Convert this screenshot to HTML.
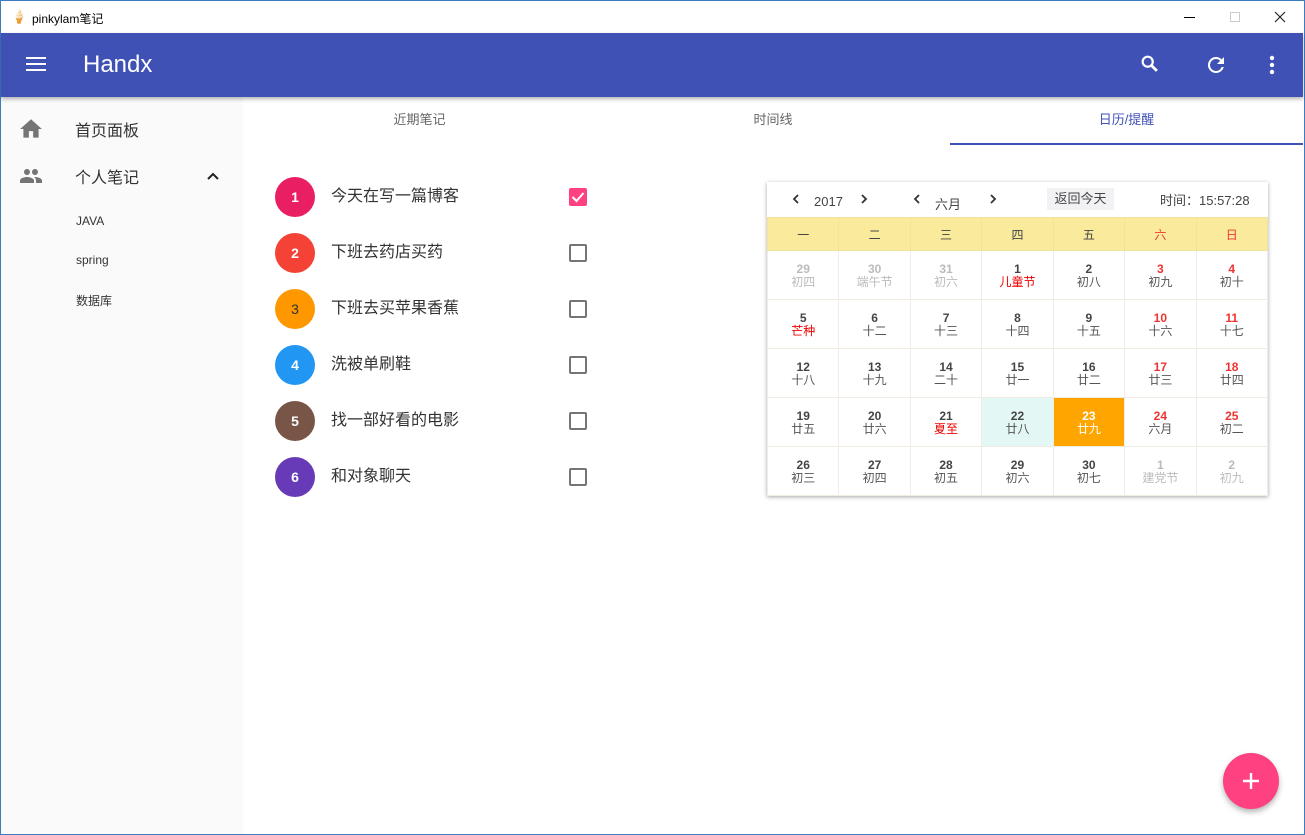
<!DOCTYPE html>
<html><head><meta charset="utf-8"><style>
*{margin:0;padding:0;box-sizing:border-box}
body{width:1305px;height:835px;overflow:hidden;background:#fff;font-family:"Liberation Sans","Noto Sans CJK SC",sans-serif;position:relative}
.frame{position:absolute;left:0;top:0;width:1305px;height:835px;border:1px solid #3d7cc0;}
.abs{position:absolute}
.title{left:1px;top:1px;width:1303px;height:32px;background:#fff;font-size:12px;color:#000}
.bar{left:1px;top:33px;width:1302px;height:64px;background:#3f51b5;box-shadow:0 2px 4px rgba(0,0,0,.3);z-index:2}
.side{left:1px;top:97px;width:242px;height:737px;background:#fafafa}
.tab{top:97px;height:48px;line-height:46px;font-size:13px;color:#666;text-align:center}
.circ{left:275px;width:40px;height:40px;border-radius:50%;color:#fff;text-align:center;line-height:40px;font-size:14px;font-weight:bold}
.txt{left:331px;font-size:16px;color:#333;line-height:20px}
.cb{left:569px;width:18px;height:18px;border:2px solid #757575;border-radius:2px}
.cal{left:767px;top:182px;width:501px;height:314px;background:#fff;box-shadow:0 1px 4px rgba(0,0,0,.35)}
table{border-collapse:collapse;position:absolute;left:0;top:35px;width:501px;table-layout:fixed}
td{border:1px solid #f0ebe3;text-align:center;font-size:12px;color:#555;height:49px;line-height:13px;padding-top:2px}
td b{display:block;font-size:12px;color:#444}
th{background:#faeb9c;height:33px;font-weight:normal;font-size:12px;color:#444;border:1px solid #f0e3a0}
.g,.g b{color:#bbb}.r,.r b{color:#e33}.rr{color:#e00}
.chev{position:absolute;top:11px}
</style></head><body>
<div class="frame"></div>
<div class="abs title"><span class="abs" style="left:10px;top:8px;font-size:13px">🍦</span><span class="abs" style="left:31px;top:9px">pinkylam笔记</span>
<span class="abs" style="left:1183px;top:16px;width:11px;height:1px;background:#000"></span>
<span class="abs" style="left:1229px;top:11px;width:10px;height:10px;border:1px solid #ccc"></span>
<svg class="abs" style="left:1273px;top:10px" width="12" height="12"><path d="M1 1l10 10M11 1L1 11" stroke="#222" stroke-width="1.2"/></svg></div>
<div class="abs bar">
<svg class="abs" style="left:24px;top:22px" width="22" height="18" viewBox="0 0 22 18"><path d="M1 3h20M1 9h20M1 15h20" stroke="#fff" stroke-width="2"/></svg>
<span class="abs" style="left:82px;top:18px;font-size:24px;color:#fff">Handx</span>
<svg class="abs" style="left:1138px;top:20px" width="22" height="22" viewBox="0 0 24 24"><circle cx="9.5" cy="9.5" r="5.5" stroke="#fff" stroke-width="2.4" fill="none"/><path d="M13.5 13.5l6 6" stroke="#fff" stroke-width="3"/></svg>
<svg class="abs" style="left:1203px;top:20px" width="24" height="24" viewBox="0 0 24 24"><path d="M17.65 6.35A7.96 7.96 0 0 0 12 4a8 8 0 1 0 7.73 10h-2.08A6 6 0 1 1 12 6c1.66 0 3.14.69 4.22 1.78L13 11h7V4l-2.35 2.35z" fill="#fff"/></svg>
<svg class="abs" style="left:1262px;top:21px" width="18" height="22" viewBox="0 0 18 22"><circle cx="9" cy="4" r="2.2" fill="#fff"/><circle cx="9" cy="11" r="2.2" fill="#fff"/><circle cx="9" cy="18" r="2.2" fill="#fff"/></svg>
</div>
<div class="abs side">
<svg class="abs" style="left:17px;top:19px" width="26" height="26" viewBox="0 0 24 24"><path d="M10 20v-6h4v6h5v-8h3L12 3 2 12h3v8z" fill="#757575"/></svg>
<span class="abs" style="left:74px;top:20px;font-size:16px;color:#333">首页面板</span>
<svg class="abs" style="left:18px;top:67px" width="24" height="24" viewBox="0 0 24 24"><path d="M16 11c1.66 0 2.99-1.34 2.99-3S17.66 5 16 5c-1.66 0-3 1.34-3 3s1.34 3 3 3zm-8 0c1.66 0 2.99-1.340 2.99-3S9.66 5 8 5C6.34 5 5 6.34 5 8s1.34 3 3 3zm0 2c-2.33 0-7 1.17-7 3.5V19h14v-2.5c0-2.33-4.67-3.5-7-3.5zm8 0c-.29 0-.62.02-.97.05 1.16.84 1.970 1.97 1.97 3.45V19h6v-2.5c0-2.33-4.67-3.5-7-3.5z" fill="#757575"/></svg>
<span class="abs" style="left:74px;top:67px;font-size:16px;color:#333">个人笔记</span>
<svg class="abs" style="left:205px;top:74px" width="14" height="10" viewBox="0 0 14 10"><path d="M2 8l5-5 5 5" stroke="#222" stroke-width="2" fill="none"/></svg>
<span class="abs" style="left:75px;top:117px;font-size:12px;color:#333">JAVA</span>
<span class="abs" style="left:75px;top:156px;font-size:12px;color:#333">spring</span>
<span class="abs" style="left:75px;top:195px;font-size:12px;color:#333">数据库</span>
</div>
<div class="abs tab" style="left:243px;width:353px">近期笔记</div>
<div class="abs tab" style="left:596px;width:354px">时间线</div>
<div class="abs tab" style="left:950px;width:353px;color:#3f51b5">日历/提醒</div>
<div class="abs" style="left:950px;top:143px;width:353px;height:2px;background:#3f51b5"></div>

<div class="abs circ" style="top:177px;background:#e91e63">1</div><div class="abs txt" style="top:187px">今天在写一篇博客</div>
<div class="abs" style="left:569px;top:188px;width:18px;height:18px;background:#ff4081;border-radius:2px"><svg width="18" height="18"><path d="M3.5 9l4 4 7-8" stroke="#fff" stroke-width="2" fill="none"/></svg></div>
<div class="abs circ" style="top:233px;background:#f44336">2</div><div class="abs txt" style="top:243px">下班去药店买药</div><div class="abs cb" style="top:244px"></div>
<div class="abs circ" style="top:289px;background:#ff9800;color:#333;font-weight:normal">3</div><div class="abs txt" style="top:299px">下班去买苹果香蕉</div><div class="abs cb" style="top:300px"></div>
<div class="abs circ" style="top:345px;background:#2196f3">4</div><div class="abs txt" style="top:355px">洗被单刷鞋</div><div class="abs cb" style="top:356px"></div>
<div class="abs circ" style="top:401px;background:#795548">5</div><div class="abs txt" style="top:411px">找一部好看的电影</div><div class="abs cb" style="top:412px"></div>
<div class="abs circ" style="top:457px;background:#673ab7">6</div><div class="abs txt" style="top:467px">和对象聊天</div><div class="abs cb" style="top:468px"></div>

<div class="abs cal">
<svg class="chev" style="left:25px" width="8" height="12"><path d="M6 2L2 6l4 4" stroke="#333" stroke-width="1.8" fill="none"/></svg>
<span class="abs" style="left:47px;top:12px;font-size:13px;color:#444">2017</span>
<svg class="chev" style="left:93px" width="8" height="12"><path d="M2 2l4 4-4 4" stroke="#333" stroke-width="1.8" fill="none"/></svg>
<svg class="chev" style="left:146px" width="8" height="12"><path d="M6 2L2 6l4 4" stroke="#333" stroke-width="1.8" fill="none"/></svg>
<span class="abs" style="left:168px;top:12px;font-size:13px;color:#444">六月</span>
<svg class="chev" style="left:222px" width="8" height="12"><path d="M2 2l4 4-4 4" stroke="#333" stroke-width="1.8" fill="none"/></svg>
<span class="abs" style="left:280px;top:6px;width:67px;height:22px;background:#f2f2f5;font-size:13px;color:#444;text-align:center;line-height:22px">返回今天</span>
<span class="abs" style="left:393px;top:8px;font-size:13px;color:#444">时间：15:57:28</span>
<table>
<tr><th>一</th><th>二</th><th>三</th><th>四</th><th>五</th><th style="color:#e33">六</th><th style="color:#e33">日</th></tr>
<tr><td class="g"><b>29</b>初四</td><td class="g"><b>30</b>端午节</td><td class="g"><b>31</b>初六</td><td><b>1</b><span class="rr">儿童节</span></td><td><b>2</b>初八</td><td><b style="color:#e33">3</b>初九</td><td><b style="color:#e33">4</b>初十</td></tr>
<tr><td><b>5</b><span class="rr">芒种</span></td><td><b>6</b>十二</td><td><b>7</b>十三</td><td><b>8</b>十四</td><td><b>9</b>十五</td><td><b style="color:#e33">10</b>十六</td><td><b style="color:#e33">11</b>十七</td></tr>
<tr><td><b>12</b>十八</td><td><b>13</b>十九</td><td><b>14</b>二十</td><td><b>15</b>廿一</td><td><b>16</b>廿二</td><td><b style="color:#e33">17</b>廿三</td><td><b style="color:#e33">18</b>廿四</td></tr>
<tr><td><b>19</b>廿五</td><td><b>20</b>廿六</td><td><b>21</b><span class="rr">夏至</span></td><td style="background:#e3f7f5"><b>22</b>廿八</td><td style="background:#ffa500;color:#fff"><b style="color:#fff">23</b>廿九</td><td><b style="color:#e33">24</b>六月</td><td><b style="color:#e33">25</b>初二</td></tr>
<tr><td><b>26</b>初三</td><td><b>27</b>初四</td><td><b>28</b>初五</td><td><b>29</b>初六</td><td><b>30</b>初七</td><td class="g"><b>1</b>建党节</td><td class="g"><b>2</b>初九</td></tr>
</table></div>

<div class="abs" style="left:1223px;top:753px;width:56px;height:56px;border-radius:50%;background:#ff4081;box-shadow:0 3px 6px rgba(0,0,0,.3)"><svg width="56" height="56"><path d="M28 20v16M20 28h16" stroke="#fff" stroke-width="2.4"/></svg></div>
</body></html>
